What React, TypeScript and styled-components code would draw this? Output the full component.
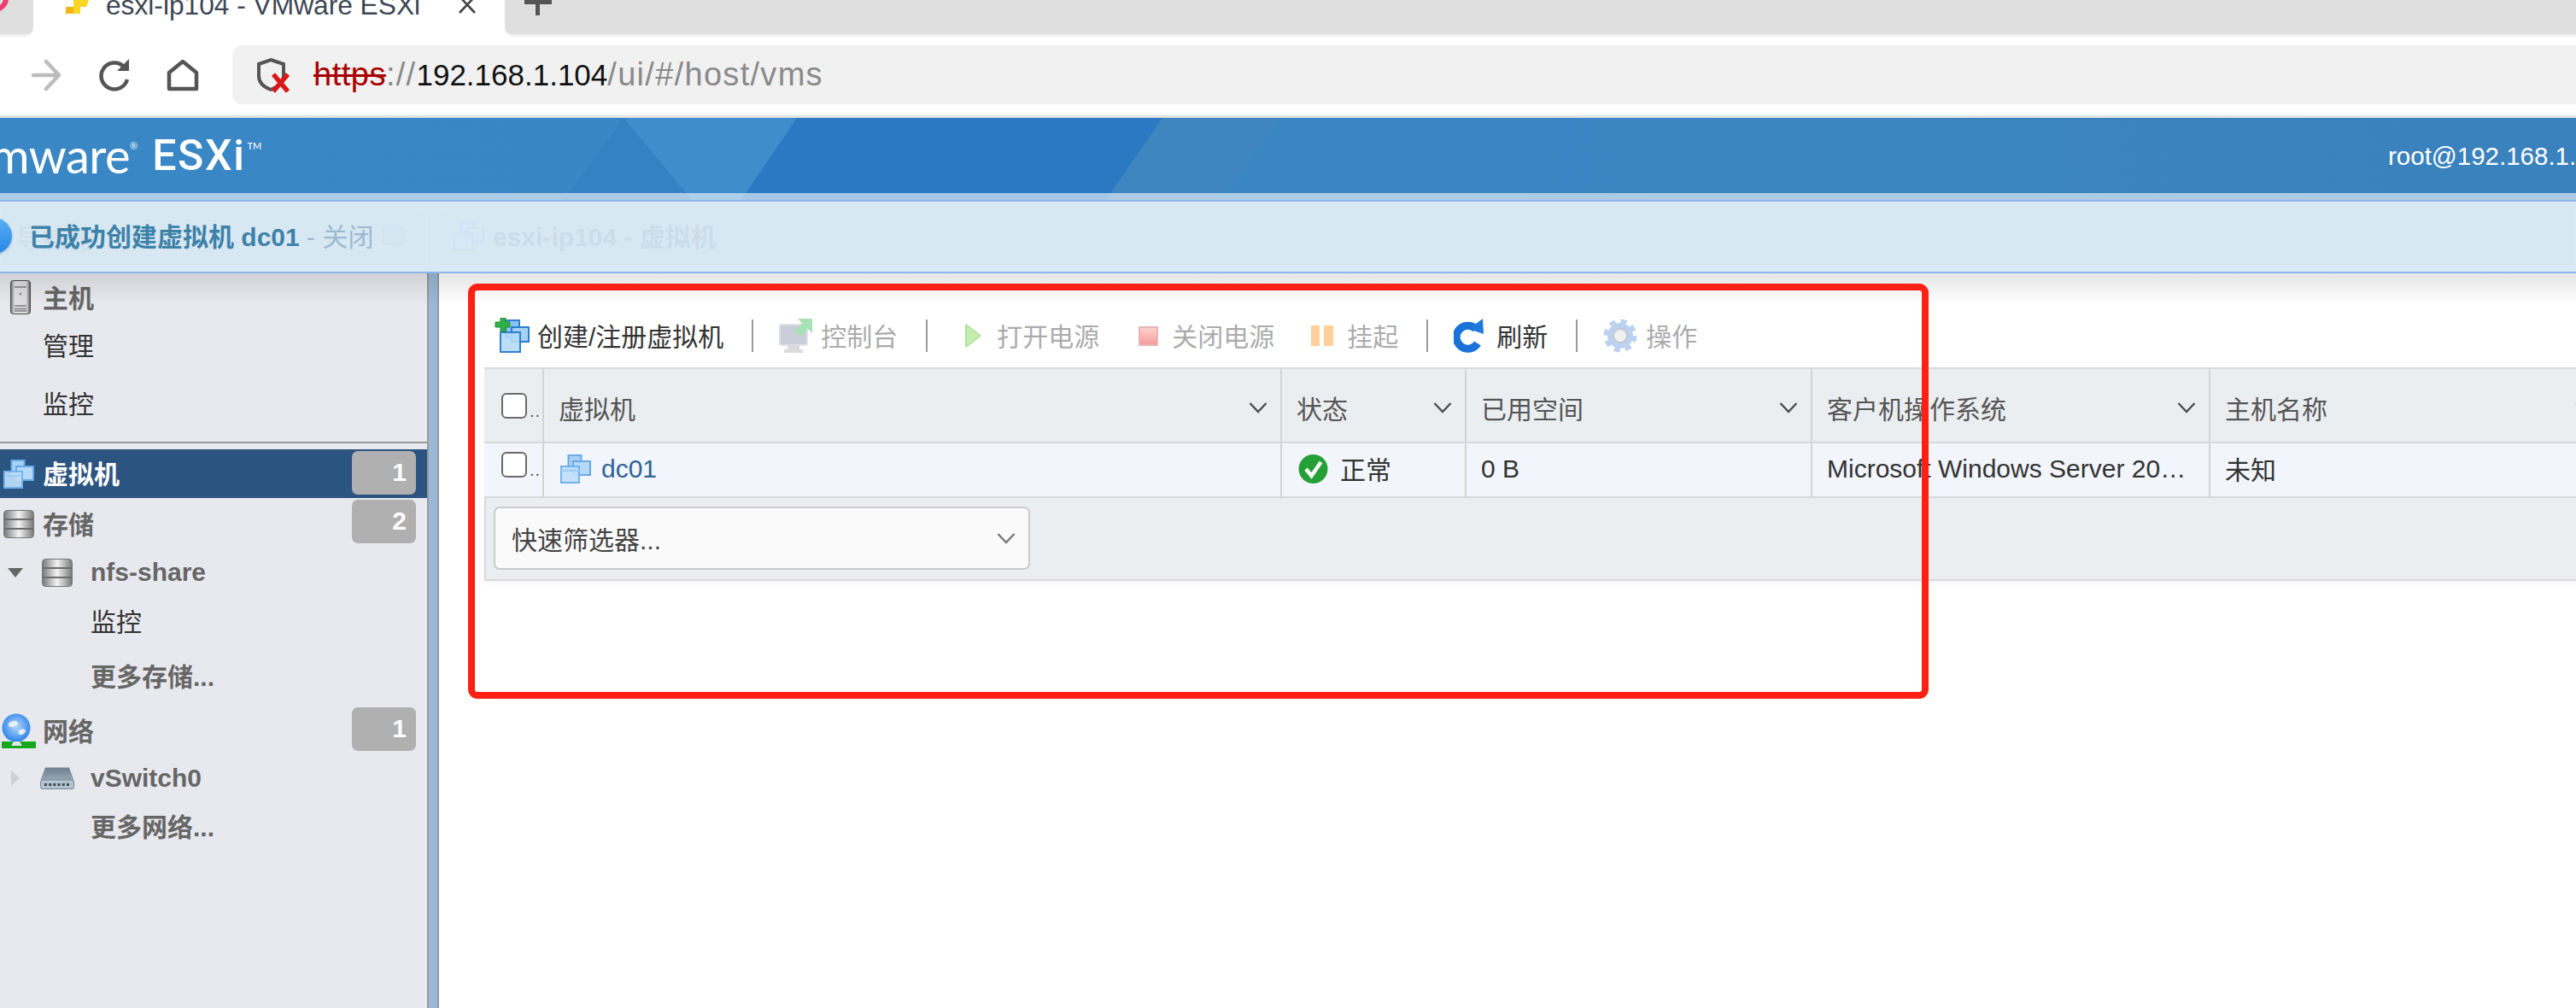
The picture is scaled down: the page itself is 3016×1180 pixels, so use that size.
import React from "react";
import styled, { createGlobalStyle } from "styled-components";

const GlobalStyle = createGlobalStyle`
  html, body { margin: 0; padding: 0; background: #fff; }
  * { box-sizing: border-box; }
`;

const FONT = `"Liberation Sans", "Noto Sans CJK SC", sans-serif`;

const Page = styled.div`
  position: relative;
  width: 3016px;
  height: 1180px;
  overflow: hidden;
  display: flex;
  flex-direction: column;
  font-family: ${FONT};
  font-size: 30px;
  color: #333;
  background: #fff;
`;

/* ---------- browser chrome ---------- */
const TabStrip = styled.div`
  flex: 0 0 43px;
  display: flex;
  align-items: flex-start;
  overflow: hidden;
  background: #fff;
`;
const StripFill = styled.div<{ $side: "left" | "right" }>`
  position: relative;
  overflow: hidden;
  height: 43px;
  border-bottom: 3px solid #efefef;
  background: #dfdfdf;
  flex: ${(p) => (p.$side === "left" ? "0 0 39px" : "1 1 auto")};
  border-radius: ${(p) => (p.$side === "left" ? "0 0 10px 0" : "0 0 0 10px")};
  display: flex;
  padding-left: 23px;
`;
const PinkFavicon = styled.span`
  position: absolute;
  left: -22px;
  top: -18px;
  width: 32px;
  height: 32px;
  border-radius: 50%;
  border: 6px solid #ee3a72;
`;
const ActiveTab = styled.div`
  flex: 0 0 552px;
  height: 43px;
  background: #fff;
  display: flex;
  align-items: flex-start;
  padding-left: 35px;
  overflow: hidden;
`;
const TabTitle = styled.span`
  font-size: 31.7px;
  line-height: 40px;
  margin-top: -14px;
  margin-left: 20px;
  color: #3c4653;
  white-space: nowrap;
`;
const BrowserBar = styled.div`
  flex: 0 0 95px;
  display: flex;
  align-items: flex-start;
  padding-top: 10px;
  background: #fff;
  border-bottom: 3px solid #e4e4e4;
`;
const NavButton = styled.div<{ $width: number }>`
  flex: 0 0 ${(p) => p.$width}px;
  height: 69px;
  display: flex;
  align-items: center;
  justify-content: center;
`;
const AddressBar = styled.div`
  flex: 1;
  height: 69px;
  margin-left: 4px;
  display: flex;
  align-items: center;
  gap: 27px;
  padding-left: 28px;
  background: #f1f1f1;
  border-radius: 12px 0 0 12px;
`;
const UrlText = styled.div`
  display: flex;
  align-items: baseline;
  white-space: nowrap;
  color: #8a8a8a;
  font-size: 38px;
  letter-spacing: 1.3px;
`;
const UrlScheme = styled.span`
  color: #a80000;
  letter-spacing: 0.5px;
  text-decoration: line-through;
`;
const UrlHost = styled.span`
  color: #111;
  font-size: 35px;
  letter-spacing: 0;
`;

/* ---------- ESXi header ---------- */
const AppHeader = styled.header`
  position: relative;
  flex: 0 0 96px;
  display: flex;
  overflow: hidden;
  background: linear-gradient(90deg, #3a87c5 0%, #3a86c4 50%, #3a82bd 100%);
  color: #fff;
  &::after {
    content: "";
    position: absolute;
    left: 0;
    right: 0;
    bottom: 0;
    height: 8px;
    background: rgba(255, 255, 255, 0.58);
  }
`;
const HeaderArt = styled.svg`
  position: absolute;
  left: 0;
  top: 0;
`;
const Brand = styled.div`
  position: relative;
  flex: 0 0 2796px;
  display: flex;
  align-items: flex-start;
  padding-top: 11px;
`;
const BrandWord = styled.span`
  font-family: "Lato", sans-serif;
  font-size: 56px;
  line-height: 66px;
  margin-left: -40px;
  letter-spacing: -0.5px;
`;
const BrandMark = styled.sup<{ $gap: number }>`
  font-family: "Lato", sans-serif;
  font-size: 11px;
  line-height: 14px;
  margin-top: 15px;
  margin-left: ${(p) => p.$gap}px;
`;
const BrandProduct = styled.span`
  font-family: "Roboto", sans-serif;
  font-weight: 500;
  font-size: 50px;
  line-height: 66px;
  margin-left: 17px;
  letter-spacing: 1.6px;
`;
const UserName = styled.div`
  position: relative;
  white-space: nowrap;
  font-size: 29.5px;
  line-height: 90px;
`;

/* ---------- notification ---------- */
const Notification = styled.div`
  position: relative;
  flex: 0 0 86px;
  display: flex;
  padding-top: 6px;
  background: #d8e9f4;
  border-top: 2px solid #8fb6ee;
  border-bottom: 2px solid #8fb6ee;
`;
const GhostPanel = styled.div<{ $side: "left" | "right" }>`
  position: relative;
  height: 68px;
  display: flex;
  align-items: center;
  flex: ${(p) => (p.$side === "left" ? "0 0 500px" : "1 1 auto")};
  margin-left: ${(p) => (p.$side === "left" ? "0" : "13px")};
  padding-left: ${(p) => (p.$side === "left" ? "0" : "17px")};
  gap: 10px;
  background: #d8e8f3;
  border: 1px solid #dcebf5;
  border-bottom-color: #d3e5f1;
  border-radius: ${(p) => (p.$side === "left" ? "0 14px 0 0" : "14px 0 0 0")};
`;
const GhostTitle = styled.span`
  font-weight: 700;
  font-size: 30px;
  padding-bottom: 3px;
  color: #cbdde9;
  white-space: nowrap;
`;
const GhostLeftTitle = styled(GhostTitle)`
  position: absolute;
  left: 18px;
  top: 12px;
  color: #d1e2ed;
`;
const GhostSquare = styled.span`
  position: absolute;
  left: 447px;
  top: 22px;
  width: 25px;
  height: 22px;
  background: #d6e7f2;
  border: 2px solid #d1e3ef;
`;
const InfoDot = styled.span`
  flex: 0 0 42px;
  height: 42px;
  margin-left: -29px;
  margin-right: 10px;
  border-radius: 50%;
  background: linear-gradient(180deg, #5ab0f5 0%, #2686e6 100%);
  box-shadow: 0 1px 3px rgba(0, 60, 120, 0.35);
`;
const MessageText = styled.span`
  position: relative;
  font-weight: 700;
  padding-bottom: 3px;
  color: #3e82a9;
  white-space: nowrap;
`;
const MessageClose = styled.span`
  font-weight: 400;
  color: #9cbad1;
`;

/* ---------- workspace ---------- */
const Workspace = styled.div`
  position: relative;
  flex: 1;
  display: flex;
  min-height: 0;
  &::before {
    content: "";
    position: absolute;
    left: 0;
    right: 0;
    top: 0;
    height: 38px;
    background: linear-gradient(180deg, rgba(0, 0, 0, 0.1), rgba(0, 0, 0, 0));
    pointer-events: none;
    z-index: 1;
  }
`;
const Sidebar = styled.nav`
  flex: 0 0 500px;
  background: #e8e9ee;
`;
const Splitter = styled.div`
  flex: 0 0 14px;
  background: #98bad8;
  border-left: 2px solid #999;
  border-right: 2px solid #999;
`;
const NavRow = styled.div<{ $height: number; $indent?: number; $active?: boolean }>`
  height: ${(p) => p.$height}px;
  display: flex;
  align-items: center;
  padding-left: ${(p) => p.$indent ?? 0}px;
  background: ${(p) => (p.$active ? "#2b5480" : "transparent")};
  position: relative;
`;
const IconSlot = styled.span<{ $width: number }>`
  flex: 0 0 ${(p) => p.$width}px;
  display: flex;
  align-items: center;
  justify-content: center;
`;
const NavLabel = styled.span<{ $bold?: boolean; $active?: boolean; $gap?: number; $latin?: boolean }>`
  margin-left: ${(p) => p.$gap ?? 0}px;
  padding-bottom: ${(p) => (p.$latin ? 0 : 3)}px;
  font-weight: ${(p) => (p.$bold ? 700 : 400)};
  color: ${(p) => (p.$active ? "#fff" : p.$bold ? "#666" : "#333")};
  white-space: nowrap;
`;
const Badge = styled.span<{ $top: number }>`
  position: absolute;
  right: 13px;
  top: ${(p) => p.$top}px;
  width: 75px;
  height: 51px;
  padding-right: 11px;
  border-radius: 7px;
  background: #b0b0b0;
  color: #fff;
  font-weight: 700;
  line-height: 50px;
  text-align: right;
`;
const Divider = styled.hr`
  margin: 5px 0 7px;
  height: 2px;
  border: 0;
  background: #999;
`;

const Main = styled.main`
  flex: 1;
  min-width: 0;
  overflow: hidden;
  padding: 52px 0 0 53px;
  background: #fff;
`;
const Toolbar = styled.div`
  height: 42px;
  margin-bottom: 16px;
  padding-left: 12px;
  display: flex;
  align-items: center;
`;
const ToolButton = styled.div<{ $gap: number; $lead?: number; $disabled?: boolean }>`
  display: flex;
  align-items: center;
  gap: ${(p) => p.$gap}px;
  margin-left: ${(p) => p.$lead ?? 0}px;
  color: ${(p) => (p.$disabled ? "#ababab" : "#333")};
  white-space: nowrap;
`;
const ToolLabel = styled.span`
  padding-bottom: 3px;
`;
const ToolSeparator = styled.span`
  flex: 0 0 2px;
  height: 38px;
  margin: 0 30px 0 33px;
  background: #9a9a9a;
`;

const GRID_COLUMNS = "68px 864px 216px 405px 466px 466px";
const Grid = styled.div`
  width: 2485px;
  border-left: 2px solid #d8d9dc;
  border-top: 2px solid #d8d9dc;
  box-shadow: 0 4px 8px rgba(0, 0, 0, 0.04);
`;
const GridRow = styled.div<{ $height: number; $bg: string }>`
  display: grid;
  grid-template-columns: ${GRID_COLUMNS};
  margin-left: -2px;
  height: ${(p) => p.$height}px;
  background: ${(p) => p.$bg};
  border-bottom: 2px solid #d6d8db;
`;
const GridCell = styled.div<{ $header?: boolean }>`
  display: flex;
  align-items: center;
  min-width: 0;
  padding-left: 17px;
  padding-right: ${(p) => (p.$header ? 15 : 25)}px;
  padding-top: ${(p) => (p.$header ? 4 : 0)}px;
  padding-bottom: ${(p) => (p.$header ? 0 : 2)}px;
  border-left: 2px solid #d2d4d7;
  color: ${(p) => (p.$header ? "#555" : "#333")};
`;
const SelectCell = styled.div<{ $top: number }>`
  display: flex;
  align-items: flex-start;
  padding: ${(p) => p.$top}px 0 0 20px;
`;
const Check = styled.input.attrs({ type: "checkbox" })`
  appearance: none;
  flex: 0 0 30px;
  width: 30px;
  height: 30px;
  margin: 0;
  border: 2px solid #6a6a6a;
  border-radius: 6px;
  background: #fff;
`;
const TruncDots = styled.span`
  font-size: 20px;
  line-height: 30px;
  margin: 6px 0 0 3px;
  letter-spacing: 1px;
  color: #555;
`;
const HeaderLabel = styled.span`
  flex: 1;
  white-space: nowrap;
`;
const VmLink = styled.span`
  margin-left: 10px;
  color: #2e6396;
`;
const StatusText = styled.span`
  margin-left: 12px;
  padding-bottom: 2px;
`;
const CellText = styled.span<{ $cjk?: boolean }>`
  white-space: nowrap;
  overflow: hidden;
  text-overflow: ellipsis;
  padding-bottom: ${(p) => (p.$cjk ? 2 : 0)}px;
`;
const GridFooter = styled.div`
  height: 97px;
  padding: 10px 0 0 9px;
  background: #ebeef1;
  border-bottom: 2px solid #d6d8db;
`;
const QuickFilter = styled.div`
  width: 628px;
  height: 74px;
  padding: 0 15px 0 19px;
  display: flex;
  align-items: center;
  justify-content: space-between;
  background: #fafafa;
  border: 2px solid #c9cacb;
  border-radius: 7px;
  color: #444;
`;
const Annotation = styled.div`
  position: absolute;
  left: 548px;
  top: 332px;
  width: 1710px;
  height: 486px;
  border: 8px solid #fe2012;
  border-radius: 11px;
  z-index: 2;
  pointer-events: none;
`;

/* ---------- icons ---------- */
const Chevron: React.FC<{ color?: string }> = ({ color = "#4c4c4c" }) => (
  <svg width="22" height="14" viewBox="0 0 22 14" fill="none" stroke={color} strokeWidth="2.4">
    <path d="M1.5 2 L11 12 L20.5 2" />
  </svg>
);

const VmIcon: React.FC<{ w?: number; h?: number }> = ({ w = 36, h = 34 }) => (
  <svg width={w} height={h} viewBox="0 0 36 34">
    <rect x="9.5" y="1" width="15" height="17" fill="#a9d1f5" stroke="#6aaae8" strokeWidth="2" />
    <rect x="15" y="8" width="20" height="16" fill="#b5d9f7" stroke="#66a8e6" strokeWidth="2" />
    <rect x="1" y="14" width="21" height="19" fill="#bfe0fa" fillOpacity="0.92" stroke="#72b2ec" strokeWidth="2" />
    <path d="M1 19h21" stroke="#9ccbf2" strokeWidth="2" />
  </svg>
);

const CreateVmIcon = () => (
  <svg width="41" height="42" viewBox="0 0 41 42">
    <rect x="13" y="3" width="16" height="20" fill="#8fc4ee" stroke="#2f80d0" strokeWidth="2" />
    <rect x="20" y="11" width="20" height="17" fill="#a5d2f3" stroke="#2b7ccd" strokeWidth="2" />
    <rect x="7" y="17" width="23" height="23" fill="#b5dbf6" fillOpacity="0.9" stroke="#2f80d0" strokeWidth="2" />
    <path d="M7 0h6v5h5v6h-5v5H7v-5H1V5h6z" fill="#2fb14a" stroke="#1e8a35" strokeWidth="1" />
  </svg>
);

const ConsoleIcon = () => (
  <svg width="40" height="42" viewBox="0 0 40 42">
    <rect x="1" y="8" width="32" height="24" rx="2" fill="#c9ced8" stroke="#dfe2e6" strokeWidth="2" />
    <rect x="10" y="32" width="14" height="5" fill="#d8dadd" />
    <rect x="6" y="37" width="22" height="4" fill="#dcdcdc" />
    <path d="M22 1 H39 V18 L33.5 12.5 L25 22 L18 15 L27 6.5 Z" fill="#a8e2b5" />
  </svg>
);

const PlayIcon = () => (
  <svg width="19" height="28" viewBox="0 0 19 28">
    <path d="M1 1 L18 14 L1 27 Z" fill="#c3eeae" stroke="#a6dc90" strokeWidth="1.5" strokeLinejoin="round" />
  </svg>
);

const StopIcon = () => (
  <svg width="23" height="23" viewBox="0 0 23 23">
    <defs>
      <linearGradient id="stopFill" x1="0" y1="0" x2="0" y2="1">
        <stop offset="0" stopColor="#fcd3d1" />
        <stop offset="1" stopColor="#f69a98" />
      </linearGradient>
    </defs>
    <rect x="1" y="1" width="21" height="21" fill="url(#stopFill)" stroke="#e9b5b3" strokeWidth="2" />
  </svg>
);

const PauseIcon = () => (
  <svg width="26" height="24" viewBox="0 0 26 24">
    <rect x="0" y="0" width="10" height="24" fill="#ffd09c" />
    <rect x="15" y="0" width="11" height="24" fill="#ffd09c" />
  </svg>
);

const RefreshIcon = () => (
  <svg width="36" height="40" viewBox="0 0 36 40" fill="none">
    <path d="M26 12 A13.5 13.5 0 1 0 28 29" stroke="#1a72d8" strokeWidth="9" />
    <path d="M18 12 L34 0 L35 18 Z" fill="#1f78dc" />
  </svg>
);

const GearIcon = () => (
  <svg width="40" height="40" viewBox="0 0 40 40">
    <circle cx="20" cy="20" r="15" fill="#bcd2f0" />
    <circle cx="20" cy="20" r="16.5" fill="none" stroke="#bcd2f0" strokeWidth="6" strokeDasharray="6.9 6.06" />
    <circle cx="20" cy="20" r="8" fill="#eff1f3" stroke="#c4c8cc" strokeWidth="2" />
  </svg>
);

const CheckBadge = () => (
  <svg width="35" height="36" viewBox="0 0 35 36">
    <circle cx="17.5" cy="18" r="17" fill="#24a037" />
    <path d="M9 18 L15.5 26 L26.5 10" fill="none" stroke="#fff" strokeWidth="4.5" />
  </svg>
);

const ServerIcon = () => (
  <svg width="24" height="40" viewBox="0 0 24 40">
    <defs>
      <linearGradient id="srv" x1="0" y1="0" x2="1" y2="0">
        <stop offset="0" stopColor="#6a6a6a" />
        <stop offset="0.2" stopColor="#e2e2e2" />
        <stop offset="0.8" stopColor="#dcdcdc" />
        <stop offset="1" stopColor="#5a5a5a" />
      </linearGradient>
    </defs>
    <rect x="0.5" y="0.5" width="23" height="39" rx="3" fill="url(#srv)" stroke="#4a4a4a" />
    <path d="M5 8h14M5 30h14M5 33.5h14M5 36h14" stroke="#7c7c7c" strokeWidth="1.4" />
    <circle cx="12" cy="16" r="1.2" fill="#777" />
  </svg>
);

const DatastoreIcon = () => (
  <svg width="36" height="33" viewBox="0 0 36 33">
    <defs>
      <linearGradient id="dsBand" x1="0" y1="0" x2="1" y2="0">
        <stop offset="0" stopColor="#777" />
        <stop offset="0.5" stopColor="#f4f4f4" />
        <stop offset="1" stopColor="#777" />
      </linearGradient>
    </defs>
    <rect x="0.5" y="0.5" width="35" height="32" rx="4" fill="url(#dsBand)" stroke="#777" />
    <path d="M1 11h34M1 22h34" stroke="#6c6c6c" strokeWidth="2" />
  </svg>
);

const GlobeIcon = () => (
  <svg width="41" height="41" viewBox="0 0 41 41">
    <defs>
      <radialGradient id="globe" cx="0.5" cy="0.45" r="0.55">
        <stop offset="0" stopColor="#b9d8fb" />
        <stop offset="1" stopColor="#2b84ea" />
      </radialGradient>
    </defs>
    <circle cx="17" cy="17" r="16.5" fill="url(#globe)" />
    <path d="M8 12c4-4 9-4 11-1 1 3-3 3-5 5-3 1-7 0-6-4zM20 20c3-2 7-2 8 0 0 3-4 6-7 5-2-1-2-3-1-5z" fill="#e4effc" />
    <rect x="0" y="33" width="40" height="8" fill="#14a81e" />
    <path d="M11 38l3-5h7l3 5z" fill="#e6e6e6" />
  </svg>
);

const SwitchIcon = () => (
  <svg width="40" height="26" viewBox="0 0 40 26">
    <defs>
      <linearGradient id="swTop" x1="0" y1="0" x2="0" y2="1">
        <stop offset="0" stopColor="#6f7f8f" />
        <stop offset="1" stopColor="#98a7b6" />
      </linearGradient>
    </defs>
    <path d="M6 0.5 H34 L39.5 15 H0.5 Z" fill="url(#swTop)" />
    <rect x="0.5" y="15" width="39" height="10.5" rx="2" fill="#b5c2d0" stroke="#75879a" />
    <path d="M5 20.5h30" stroke="#3d4a58" strokeWidth="3" strokeDasharray="3 2.2" />
  </svg>
);

const TreeArrow: React.FC<{ open?: boolean }> = ({ open }) =>
  open ? (
    <svg width="18" height="11" viewBox="0 0 18 11">
      <path d="M0 0 H18 L9 11 Z" fill="#666" />
    </svg>
  ) : (
    <svg width="10" height="18" viewBox="0 0 10 18">
      <path d="M0 0 L10 9 L0 18 Z" fill="#cfd0d4" />
    </svg>
  );

/* ---------- data ---------- */
const HEADERS = ["虚拟机", "状态", "已用空间", "客户机操作系统", "主机名称"];

export default function App() {
  return (
    <Page>
      <GlobalStyle />

      <TabStrip>
        <StripFill $side="left">
          <PinkFavicon />
        </StripFill>
        <ActiveTab>
          <svg width="30" height="16" viewBox="0 0 30 16">
            <path d="M12 0 H30 L27 8 H20 V16 H3 V8 H12 Z" fill="#fbd626" />
            <path d="M3 8 H12 V16 H3 Z" fill="#f3b414" />
          </svg>
          <TabTitle>esxi-ip104 - VMware ESXi</TabTitle>
          <svg width="20" height="16" viewBox="0 0 20 16" style={{ marginLeft: 45 }} stroke="#444" strokeWidth="2.6">
            <path d="M1 -4 L19 15 M19 -4 L1 15" />
          </svg>
        </ActiveTab>
        <StripFill $side="right">
          <svg width="32" height="18" viewBox="0 0 32 18" fill="#555">
            <rect x="0" y="0" width="32" height="5" />
            <rect x="13" y="0" width="5" height="18" />
          </svg>
        </StripFill>
      </TabStrip>

      <BrowserBar>
        <NavButton $width={108}>
          <svg width="36" height="38" viewBox="0 0 36 38" fill="none" stroke="#bcbcbc" strokeWidth="4.5" strokeLinecap="round" strokeLinejoin="round">
            <path d="M3 19 H33 M18 3 L33 19 L18 35" />
          </svg>
        </NavButton>
        <NavButton $width={52}>
          <svg width="38" height="38" viewBox="0 0 38 38" fill="none">
            <path d="M30 9 A15.5 15.5 0 1 0 34 24" stroke="#555" strokeWidth="4.5" />
            <path d="M22 14 H36 V0 Z" fill="#555" />
          </svg>
        </NavButton>
        <NavButton $width={108}>
          <svg width="38" height="38" viewBox="0 0 38 38" fill="none" stroke="#555" strokeWidth="4.5" strokeLinejoin="round">
            <path d="M19 3 L35 16 V35 H3 V16 Z" />
          </svg>
        </NavButton>
        <AddressBar>
          <svg width="40" height="42" viewBox="0 0 40 42" fill="none">
            <path d="M17 3 L32 8 V22 C32 30 25 35 17 38 C9 35 3 30 3 22 V8 Z" stroke="#555" strokeWidth="4" />
            <path d="M20 20 L37 40 M37 20 L20 40" stroke="#d81818" strokeWidth="5.5" />
          </svg>
          <UrlText>
            <UrlScheme>https</UrlScheme>
            <span>://</span>
            <UrlHost>192.168.1.104</UrlHost>
            <span>/ui/#/host/vms</span>
          </UrlText>
        </AddressBar>
      </BrowserBar>

      <AppHeader>
        <HeaderArt width="3016" height="96" viewBox="0 0 3016 96">
          <path d="M730 0 L660 96 H810 Z" fill="#3582c3" />
          <path d="M730 0 L810 96 H868 L933 0 Z" fill="#3f8dcb" />
          <path d="M933 0 L868 96 H1295 L1361 0 Z" fill="#2b79c3" />
          <path d="M1361 0 H1500 L1430 96 H1295 Z" fill="#3f86c1" />
        </HeaderArt>
        <Brand>
          <BrandWord>vmware</BrandWord>
          <BrandMark $gap={0}>®</BrandMark>
          <BrandProduct>ESXi</BrandProduct>
          <BrandMark $gap={2}>TM</BrandMark>
        </Brand>
        <UserName>root@192.168.1.104</UserName>
      </AppHeader>

      <Notification>
        <GhostPanel $side="left">
          <GhostLeftTitle>导航器</GhostLeftTitle>
          <GhostSquare />
          <InfoDot />
          <MessageText>
            已成功创建虚拟机 dc01 <MessageClose>- 关闭</MessageClose>
          </MessageText>
        </GhostPanel>
        <GhostPanel $side="right">
          <svg width="36" height="34" viewBox="0 0 36 34" fill="#d6e8f6" stroke="#cfe3f3" strokeWidth="2">
            <rect x="9" y="1" width="15" height="17" />
            <rect x="15" y="8" width="20" height="16" />
            <rect x="1" y="14" width="21" height="19" />
          </svg>
          <GhostTitle>esxi-ip104 - 虚拟机</GhostTitle>
        </GhostPanel>
      </Notification>

      <Workspace>
        <Sidebar>
          <NavRow $height={56}>
            <IconSlot $width={47}>
              <ServerIcon />
            </IconSlot>
            <NavLabel $bold $gap={3}>主机</NavLabel>
          </NavRow>
          <NavRow $height={56} $indent={50}>
            <NavLabel>管理</NavLabel>
          </NavRow>
          <NavRow $height={80} $indent={50}>
            <NavLabel>监控</NavLabel>
          </NavRow>
          <Divider />
          <NavRow $height={57} $active>
            <IconSlot $width={44}>
              <VmIcon />
            </IconSlot>
            <NavLabel $bold $active $gap={6}>虚拟机</NavLabel>
            <Badge $top={2}>1</Badge>
          </NavRow>
          <NavRow $height={60}>
            <IconSlot $width={44}>
              <DatastoreIcon />
            </IconSlot>
            <NavLabel $bold $gap={6}>存储</NavLabel>
            <Badge $top={2}>2</Badge>
          </NavRow>
          <NavRow $height={54}>
            <IconSlot $width={36}>
              <TreeArrow open />
            </IconSlot>
            <IconSlot $width={62}>
              <DatastoreIcon />
            </IconSlot>
            <NavLabel $bold $latin $gap={8}>nfs-share</NavLabel>
          </NavRow>
          <NavRow $height={60} $indent={106}>
            <NavLabel>监控</NavLabel>
          </NavRow>
          <NavRow $height={68} $indent={106}>
            <NavLabel $bold>更多存储...</NavLabel>
          </NavRow>
          <NavRow $height={60}>
            <IconSlot $width={44}>
              <GlobeIcon />
            </IconSlot>
            <NavLabel $bold $gap={6}>网络</NavLabel>
            <Badge $top={3}>1</Badge>
          </NavRow>
          <NavRow $height={52}>
            <IconSlot $width={36}>
              <TreeArrow />
            </IconSlot>
            <IconSlot $width={62}>
              <SwitchIcon />
            </IconSlot>
            <NavLabel $bold $latin $gap={8}>vSwitch0</NavLabel>
          </NavRow>
          <NavRow $height={60} $indent={106}>
            <NavLabel $bold>更多网络...</NavLabel>
          </NavRow>
        </Sidebar>
        <Splitter />
        <Main>
          <Toolbar>
            <ToolButton $gap={9}>
              <CreateVmIcon />
              <ToolLabel>创建/注册虚拟机</ToolLabel>
            </ToolButton>
            <ToolSeparator />
            <ToolButton $gap={9} $disabled>
              <ConsoleIcon />
              <ToolLabel>控制台</ToolLabel>
            </ToolButton>
            <ToolSeparator />
            <ToolButton $gap={18} $lead={14} $disabled>
              <PlayIcon />
              <ToolLabel>打开电源</ToolLabel>
            </ToolButton>
            <ToolButton $gap={16} $lead={46} $disabled>
              <StopIcon />
              <ToolLabel>关闭电源</ToolLabel>
            </ToolButton>
            <ToolButton $gap={16} $lead={43} $disabled>
              <PauseIcon />
              <ToolLabel>挂起</ToolLabel>
            </ToolButton>
            <ToolSeparator />
            <ToolButton $gap={14}>
              <RefreshIcon />
              <ToolLabel>刷新</ToolLabel>
            </ToolButton>
            <ToolSeparator />
            <ToolButton $gap={10} $disabled>
              <GearIcon />
              <ToolLabel>操作</ToolLabel>
            </ToolButton>
          </Toolbar>

          <Grid>
            <GridRow $height={87} $bg="#ebeef1">
              <SelectCell $top={28}>
                <Check readOnly />
                <TruncDots>..</TruncDots>
              </SelectCell>
              {HEADERS.map((label) => (
                <GridCell key={label} $header>
                  <HeaderLabel>{label}</HeaderLabel>
                  <Chevron />
                </GridCell>
              ))}
            </GridRow>
            <GridRow $height={64} $bg="#f2f5fb">
              <SelectCell $top={10}>
                <Check readOnly />
                <TruncDots>..</TruncDots>
              </SelectCell>
              <GridCell>
                <IconSlot $width={40}>
                  <VmIcon />
                </IconSlot>
                <VmLink>dc01</VmLink>
              </GridCell>
              <GridCell>
                <IconSlot $width={39}>
                  <CheckBadge />
                </IconSlot>
                <StatusText>正常</StatusText>
              </GridCell>
              <GridCell>
                <CellText>0 B</CellText>
              </GridCell>
              <GridCell>
                <CellText>Microsoft Windows Server 2016 (64-bit)</CellText>
              </GridCell>
              <GridCell>
                <CellText $cjk>未知</CellText>
              </GridCell>
            </GridRow>
            <GridFooter>
              <QuickFilter>
                <span>快速筛选器...</span>
                <Chevron color="#777" />
              </QuickFilter>
            </GridFooter>
          </Grid>
        </Main>
      </Workspace>

      <Annotation />
    </Page>
  );
}
